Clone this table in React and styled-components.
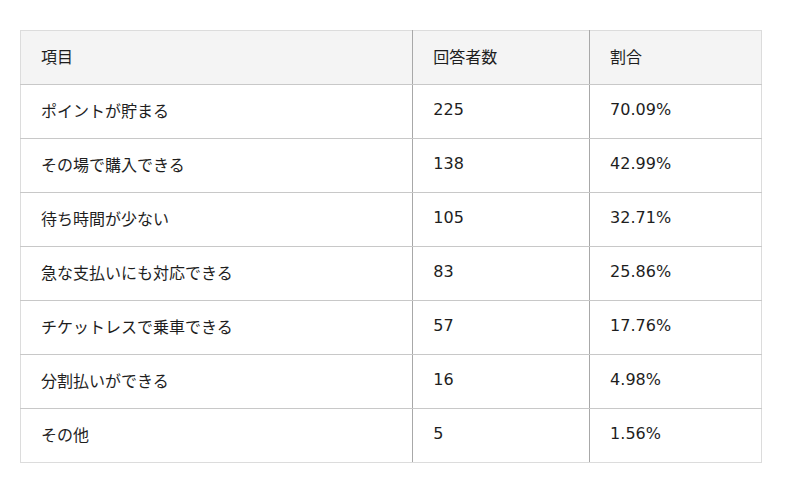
import React from 'react';
import styled, { createGlobalStyle } from 'styled-components';

const GlobalStyle = createGlobalStyle`
    body {
        margin: 0;
        background: #fff;
        font-family: "DejaVu Sans", "Noto Sans CJK JP", sans-serif;
    }
`;

const Page = styled.div`
    padding: 30px 20px;
`;

const Table = styled.table`
    width: 742px;
    border-collapse: collapse;
    border: 1px solid #dcdcdc;
    color: #1e1e1e;
    font-size: 16px;
`;

const HeadCell = styled.th`
    width: ${props => props.$w}px;
    height: 54px;
    padding: 0 20px 4px;
    text-align: left;
    font-weight: normal;
    background: #f4f4f4;
    border-bottom: 1px solid #c8c8c8;
    border-left: 1px solid ${props => (props.$first ? '#dcdcdc' : '#a8a8a8')};
    box-sizing: border-box;
`;

const Cell = styled.td`
    height: 54px;
    padding: 0 20px 4px;
    border-bottom: 1px solid #c8c8c8;
    border-left: 1px solid ${props => (props.$first ? '#dcdcdc' : '#a8a8a8')};
    box-sizing: border-box;

    tr:last-child > & {
        border-bottom-color: #dcdcdc;
    }
`;

const rows = [
    ['ポイントが貯まる', '225', '70.09%'],
    ['その場で購入できる', '138', '42.99%'],
    ['待ち時間が少ない', '105', '32.71%'],
    ['急な支払いにも対応できる', '83', '25.86%'],
    ['チケットレスで乗車できる', '57', '17.76%'],
    ['分割払いができる', '16', '4.98%'],
    ['その他', '5', '1.56%'],
];

const App = () => (
    <Page>
        <GlobalStyle />
        <Table>
            <thead>
                <tr>
                    <HeadCell $first $w={393}>項目</HeadCell>
                    <HeadCell $w={177}>回答者数</HeadCell>
                    <HeadCell $w={172}>割合</HeadCell>
                </tr>
            </thead>
            <tbody>
                {rows.map(row => (
                    <tr key={row[0]}>
                        <Cell $first>{row[0]}</Cell>
                        <Cell>{row[1]}</Cell>
                        <Cell>{row[2]}</Cell>
                    </tr>
                ))}
            </tbody>
        </Table>
    </Page>
);

export default App;
